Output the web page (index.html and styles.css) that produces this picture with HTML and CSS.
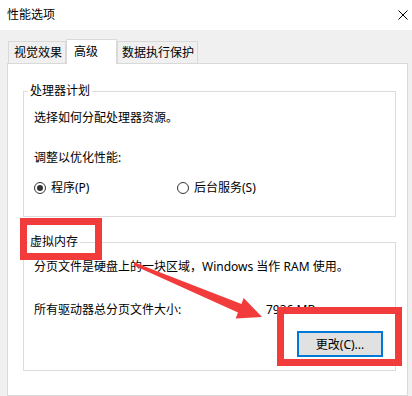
FILE: index.html
```html
<!DOCTYPE html>
<html lang="zh-CN">
<head>
  <meta charset="UTF-8">
  <meta name="viewport" content="width=device-width, initial-scale=1.0">
  <title>性能选项</title>
  <link rel="stylesheet" href="styles.css">
</head>
<body>
  <!-- 标题栏 -->
  <div class="titlebar">
    <span class="title">性能选项</span>
    <svg class="close" width="10" height="10" viewBox="0 0 10 10">
      <path d="M0.5 0.5 L9.5 9.5 M9.5 0.5 L0.5 9.5" stroke="#000" stroke-width="1" fill="none"/>
    </svg>
  </div>

  <div class="client">
    <!-- 选项卡 -->
    <div class="tabs">
      <div class="tab tab-visual">视觉效果</div>
      <div class="tab tab-adv active">高级</div>
      <div class="tab tab-dep">数据执行保护</div>
    </div>

    <div class="panel">
      <div class="group group-cpu">
        <div class="group-title">处理器计划</div>
        <p class="line first">选择如何分配处理器资源。</p>
        <p class="line gap-big">调整以优化性能:</p>
        <div class="radios">
          <label class="radio radio-prog"><span class="dot checked"></span>程序(P)</label>
          <label class="radio"><span class="dot"></span>后台服务(S)</label>
        </div>
      </div>

      <div class="group group-vm">
        <div class="group-title">虚拟内存</div>
        <p class="line first-vm">分页文件是硬盘上的一块区域，Windows 当作 RAM 使用。</p>
        <div class="size-row">
          <span class="size-label">所有驱动器总分页文件大小:</span>
          <span>7936 MB</span>
        </div>
        <button class="btn">更改(C)...</button>
      </div>
    </div>
  </div>

  <!-- 红色标注 -->
  <div class="mark mark-label"></div>
  <div class="mark mark-btn"></div>
  <svg class="arrow" width="412" height="396" viewBox="0 0 412 396">
    <polygon fill="#f23c3c" points="134.6,262.4 241.4,304.0 243.7,298.0 262,317 235.7,318.4 238.0,312.4 133.4,265.2"/>
  </svg>
</body>
</html>
```

FILE: styles.css
```css
  /* 기본 */
  body {
    margin: 0;
    width: 412px;
    height: 396px;
    overflow: hidden;
    position: relative;
    font-family: "Noto Sans", "Noto Sans CJK SC", sans-serif;
    font-size: 12px;
    line-height: 16px;
    color: #000;
    background: #f0f0f0;
  }

  p {
    margin: 0;
  }

  /* 标题栏 */
  .titlebar {
    height: 30px;
    background: #fff;
    display: flex;
    align-items: center;
    justify-content: space-between;
    padding: 0 4px 0 7px;
  }

  .close {
    margin-top: -1px;
  }

  /* 客户区 */
  .client {
    padding: 9px 4px 0 7px;
  }

  .tabs {
    display: flex;
    align-items: flex-end;
    padding-left: 1px;
    margin-bottom: -1px;
    position: relative;
    z-index: 1;
  }

  .tab {
    box-sizing: border-box;
    height: 23px;
    display: flex;
    align-items: center;
    border: 1px solid #d9d9d9;
    background: #f0f0f0;
  }

  .tab-visual {
    width: 58px;
    padding-left: 5px;
  }

  .tab-adv {
    width: 51px;
    padding-left: 7px;
  }

  .tab-dep {
    width: 81px;
    padding-left: 4px;
  }

  .tab.active {
    height: 25px;
    background: #fff;
    border-bottom: none;
    padding-bottom: 1px;
  }

  .panel {
    background: #fff;
    border: 1px solid #d9d9d9;
    padding: 27px 11px 24px 15px;
  }

  /* 分组框 */
  .group {
    border: 1px solid #dcdcdc;
    padding: 0 10px 0 10px;
  }

  .group-cpu {
    padding-bottom: 20px;
  }

  .group-vm {
    margin-top: 25px;
    padding-bottom: 13px;
    display: flex;
    flex-direction: column;
  }

  .group-title {
    width: fit-content;
    margin: -9px 0 0 -6px;
    padding: 0 2px;
    background: #fff;
  }

  .first {
    margin-top: 11px;
  }

  .gap-big {
    margin-top: 24px;
  }

  .first-vm {
    margin-top: 9px;
    white-space: nowrap;
  }

  .radios {
    display: flex;
    margin-top: 14px;
  }

  .radio {
    display: flex;
    align-items: center;
    gap: 5px;
  }

  .radio-prog {
    width: 143px;
  }

  .dot {
    box-sizing: border-box;
    width: 12px;
    height: 12px;
    border: 1px solid #333;
    border-radius: 50%;
    display: flex;
    align-items: center;
    justify-content: center;
  }

  .dot.checked::after {
    content: "";
    width: 6px;
    height: 6px;
    border-radius: 50%;
    background: #333;
  }

  .size-row {
    display: flex;
    margin-top: 27px;
  }

  .size-label {
    width: 232px;
  }

  .btn {
    align-self: flex-end;
    margin: 13px 2px 0 0;
    width: 86px;
    height: 26px;
    padding: 0;
    font-family: "Noto Sans", "Noto Sans CJK SC", sans-serif;
    font-size: 12px;
    color: #000;
    background: #e1e1e1;
    border: 2px solid #0078d7;
  }

  /* 红色标注 */
  .mark {
    position: absolute;
    box-sizing: border-box;
    border: 7px solid #f23c3c;
  }

  .mark-label {
    left: 20px;
    top: 218px;
    width: 82px;
    height: 42px;
  }

  .mark-btn {
    left: 277px;
    top: 307px;
    width: 125px;
    height: 59px;
  }

  .arrow {
    position: absolute;
    left: 0;
    top: 0;
  }
```
